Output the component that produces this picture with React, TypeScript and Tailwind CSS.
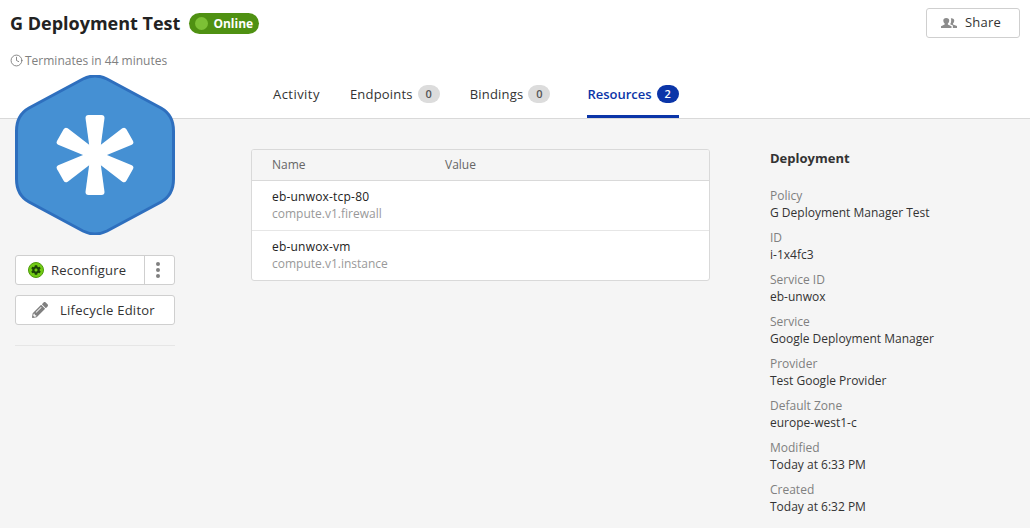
import { Clock } from 'lucide-react';
import { FaCog, FaPencilAlt } from 'react-icons/fa';

const details = [
  { label: 'Policy', value: 'G Deployment Manager Test' },
  { label: 'ID', value: 'i-1x4fc3' },
  { label: 'Service ID', value: 'eb-unwox' },
  { label: 'Service', value: 'Google Deployment Manager' },
  { label: 'Provider', value: 'Test Google Provider' },
  { label: 'Default Zone', value: 'europe-west1-c' },
  { label: 'Modified', value: 'Today at 6:33 PM' },
  { label: 'Created', value: 'Today at 6:32 PM' },
];

const resources = [
  { name: 'eb-unwox-tcp-80', type: 'compute.v1.firewall' },
  { name: 'eb-unwox-vm', type: 'compute.v1.instance' },
];

function Count({ n, active }: { n: number; active?: boolean }) {
  return (
    <span
      className={
        active
          ? 'ml-[5px] flex h-[18px] w-[22px] items-center justify-center rounded-full bg-[#0b35a8] text-[11px] font-semibold tracking-normal text-white'
          : 'ml-[5px] flex h-[18px] w-[22px] items-center justify-center rounded-full bg-[#dcdcdc] text-[11px] font-semibold tracking-normal text-[#555]'
      }
    >
      {n}
    </span>
  );
}

function Hexagon() {
  const arm = 'M70.5 43 Q70.5 40 73.5 40 H86.5 Q89.5 40 89.5 43 L84.5 80 H75.5 Z';
  return (
    <svg viewBox="0 0 160 160" className="block h-[160px] w-[160px]">
      <path
        d="M68 4 Q80 -2 92 4 L146 33 Q158.5 40 158.5 56 L158.5 104 Q158.5 120 146 127 L92 156 Q80 162 68 156 L14 127 Q1.5 120 1.5 104 L1.5 56 Q1.5 40 14 33 Z"
        fill="#4590d3"
        stroke="#2e6fbe"
        strokeWidth="3"
      />
      {[0, 60, 120, 180, 240, 300].map((a) => (
        <path key={a} d={arm} fill="#fff" transform={`rotate(${a} 80 80)`} />
      ))}
    </svg>
  );
}

export default function App() {
  return (
    <div className="flex h-[528px] w-[1030px] flex-col overflow-hidden bg-[#f5f5f5] font-['Open_Sans',sans-serif]">
      <header className="h-[119px] shrink-0 border-b border-[#d9d9d9] bg-white">
        <div className="flex items-start justify-between pl-[10px] pr-[10px] pt-[8px]">
          <div className="flex items-center pt-[5px]">
            <h1 className="text-[18px] font-bold leading-[21px] text-[#222]">G Deployment Test</h1>
            <span className="ml-[9px] flex h-[21px] w-[70px] items-center rounded-full bg-[#4f9112] pl-[6px] text-[12px] font-bold text-white">
              <span className="mr-[5px] h-[13px] w-[13px] rounded-full bg-[#7cc135]" />
              Online
            </span>
          </div>
          <button className="flex h-[30px] w-[94px] items-center rounded-[3px] border border-[#cfcfcf] bg-white pl-[14px] text-[13px] tracking-[0.2px] text-[#333]">
            <svg viewBox="1 1 14 10" preserveAspectRatio="none" className="mr-[8px] h-[10px] w-[16px]" fill="#8c8c8c">
              <path d="M1 11 V9.2 L4.2 7.6 V6.6 Q3 5.6 3 3.6 Q3 1 5.6 1 Q8.2 1 8.2 3.6 Q8.2 5.6 7 6.6 V7.6 L10.2 9.2 V11 Z" />
              <path d="M9.6 1.2 Q12.6 1 12.6 3.8 Q12.6 5.6 11.5 6.6 V7.5 L15 9 V11 H11.4 V8.6 L9 7.2 Q10 5.6 9.9 3.6 Q9.9 2.2 9.6 1.2 Z" />
            </svg>
            Share
          </button>
        </div>
        <div className="mt-[15px] flex items-center pl-[10px] text-[12px] leading-[16px] text-[#808080]">
          <Clock size={13} strokeWidth={1.5} color="#707070" className="mr-[2px] mt-[-2px]" />
          Terminates in 44 minutes
        </div>
        <nav className="ml-[273px] mt-[11px] flex h-[38px] items-start text-[13px] leading-[18px] text-[#333]">
          <div className="mr-[30px] mt-[5px] tracking-[0.45px]">Activity</div>
          <div className="mr-[30px] mt-[5px] flex items-center tracking-[0.2px]">
            Endpoints
            <Count n={0} />
          </div>
          <div className="mr-[37px] mt-[5px] flex items-center tracking-[0.2px]">
            Bindings
            <Count n={0} />
          </div>
          <div className="flex h-[38px] items-start border-b-[3px] border-[#0b35a8] pt-[5px] font-semibold text-[#0b35a8]">
            Resources
            <Count n={2} active />
          </div>
        </nav>
      </header>

      <main className="flex items-start">
        <aside className="ml-[15px] mt-[-44px] w-[160px] shrink-0">
          <Hexagon />
          <div className="mt-[20px] flex h-[30px] rounded-[3px] border border-[#cfcfcf] bg-white text-[13px] tracking-[0.25px] text-[#333]">
            <button className="flex flex-1 items-center pl-[12px]">
              <span className="mr-[7px] flex h-[16px] w-[16px] items-center justify-center rounded-full border border-[#4d9a0c] bg-[#72cc14]">
                <FaCog size={10} color="#1c4406" />
              </span>
              <span className="pt-[1px]">Reconfigure</span>
            </button>
            <button className="flex w-[30px] flex-col items-center justify-center gap-[2px] border-l border-[#cfcfcf] pr-[4px]">
              <span className="h-[4px] w-[4px] rounded-full bg-[#808080]" />
              <span className="h-[4px] w-[4px] rounded-full bg-[#808080]" />
              <span className="h-[4px] w-[4px] rounded-full bg-[#808080]" />
            </button>
          </div>
          <button className="mt-[10px] flex h-[30px] w-full items-center rounded-[3px] border border-[#cfcfcf] bg-white pl-[16px] text-[13px] tracking-[0.25px] text-[#333]">
            <FaPencilAlt size={16} color="#808080" className="mr-[12px]" />
            <span className="pt-[1px]">Lifecycle Editor</span>
          </button>
          <div className="mt-[20px] h-px bg-[#e6e6e6]" />
        </aside>

        <section className="ml-[76px] mt-[30px] w-[459px] shrink-0 overflow-hidden rounded-[3px] border border-[#d9d9d9] bg-white">
          <div className="flex h-[31px] items-center border-b border-[#d9d9d9] bg-[#f5f5f5] pl-[20px] text-[12px] text-[#666]">
            <span className="w-[173px]">Name</span>
            <span>Value</span>
          </div>
          {resources.map((r, i) => (
            <div key={r.name} className={i === 0 ? 'flex h-[50px] flex-col justify-center border-b border-[#e6e6e6] pl-[20px]' : 'flex h-[49px] flex-col justify-center pl-[20px]'}>
              <div className="mt-[-1px] text-[12px] leading-[17px] tracking-[0.2px] text-[#222]">{r.name}</div>
              <div className="text-[12px] leading-[17px] text-[#999]">{r.type}</div>
            </div>
          ))}
        </section>

        <section className="ml-[60px] mt-[30px] w-[240px]">
          <h2 className="text-[13px] font-bold leading-[18px] text-[#333]">Deployment</h2>
          <dl className="mt-[20px]">
            {details.map((d) => (
              <div key={d.label} className="mb-[8px] text-[12px] leading-[17px]">
                <dt className="text-[#808080]">{d.label}</dt>
                <dd className="text-[#333]">{d.value}</dd>
              </div>
            ))}
          </dl>
        </section>
      </main>
    </div>
  );
}
